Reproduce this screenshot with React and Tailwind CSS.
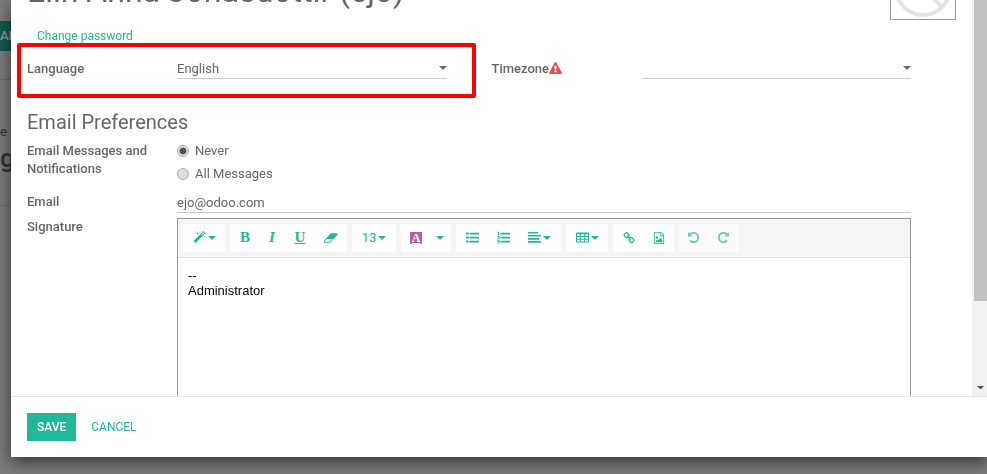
import React from 'react';

const Icon = ({ d, box = 1792, className = "size-3.5" }) => (
  <svg viewBox={`0 0 ${box} 1792`} className={className} fill="currentColor" aria-hidden="true">
    <path d={d} />
  </svg>
);

const icons = {
  magic: "M1254 581l293-293-107-107-293 293zm447-293q0 27-18 45l-1286 1286q-18 18-45 18t-45-18l-198-198q-18-18-18-45t18-45l1286-1286q18-18 45-18t45 18l198 198q18 18 18 45zm-1351-190l98 30-98 30-30 98-30-98-98-30 98-30 30-98zm350 162l196 60-196 60-60 196-60-196-196-60 196-60 60-196zm930 478l98 30-98 30-30 98-30-98-98-30 98-30 30-98zm-640-640l98 30-98 30-30 98-30-98-98-30 98-30 30-98z",
  eraser: "M832 1408l336-384h-768l-336 384h768zm1013-1077q15 34 9.500 71.500t-30.500 65.500l-896 1024q-38 44-96 44h-768q-38 0-69.500-20.500t-47.500-54.500q-15-34-9.500-71.500t30.500-65.500l896-1024q38-44 96-44h768q38 0 69.500 20.500t47.500 54.500z",
  listUl: "M0 192h380v300h-380zM0 746h380v300h-380zM0 1300h380v300h-380zM480 240h1312v230h-1312zM480 790h1312v230h-1312zM480 1340h1312v230h-1312z",
  listOl: "M130 100h150v420h-150zM50 500h300v90h-300zM50 150h100v100h-100zM50 700h310v270l-160 80h160v100h-310v-160l160-100v-80h-160zM50 1230h310v480h-310v-100h160v-90h-110v-100h110v-90h-160zM480 240h1312v230h-1312zM480 790h1312v230h-1312zM480 1340h1312v230h-1312z",
  alignLeft: "M0 128h1408v230h-1408zM0 544h1792v230h-1792zM0 960h1536v230h-1536zM0 1376h1792v230h-1792z",
  table: "M128 192h1536q128 0 128 128v1152q0 128-128 128h-1536q-128 0-128-128v-1152q0-128 128-128zM150 440v260h370v-260zM660 440v260h472v-260zM1272 440v260h370v-260zM150 820v260h370v-260zM660 820v260h472v-260zM1272 820v260h370v-260zM150 1200v260h370v-260zM660 1200v260h472v-260zM1272 1200v260h370v-260z",
  link: "M1520 1216q0-40-28-68l-208-208q-28-28-68-28-42 0-72 32 3 3 19 18.500t21.500 21.500 15 19 13 25.500 3.500 27.500q0 40-28 68t-68 28q-15 0-27.500-3.500t-25.500-13-19-15-21.500-21.500-18.500-19q-33 31-33 73 0 40 28 68l206 207q27 27 68 27 40 0 68-26l147-146q28-28 28-67zm-703-705q0-40-28-68l-206-207q-28-28-68-28-39 0-68 27l-147 146q-28 28-28 67 0 40 28 68l208 208q27 27 68 27 42 0 72-31-3-3-19-18.500t-21.500-21.500-15-19-13-25.500-3.500-27.500q0-40 28-68t68-28q15 0 27.500 3.500t25.500 13 19 15 21.500 21.500 18.500 19q33-31 33-73zm895 705q0 120-85 203l-147 146q-83 83-203 83-121 0-204-85l-206-207q-83-83-83-203 0-123 88-209l-88-88q-86 88-208 88-120 0-204-84l-208-208q-84-84-84-204t85-203l147-146q83-83 203-83 121 0 204 85l206 207q83 83 83 203 0 123-88 209l88 88q86-88 208-88 120 0 204 84l208 208q84 84 84 204z",
  image: "M1596 380q28 28 48 76t20 88v1152q0 40-28 68t-68 28h-1344q-40 0-68-28t-28-68v-1600q0-40 28-68t68-28h896q40 0 88 20t76 48zm-444-244v376h376q-10-29-22-41l-313-313q-12-12-41-22zm384 1528v-1024h-416q-40 0-68-28t-28-68v-416h-768v1536h1280zm-128-448v320h-1024v-192l192-192 128 128 384-384zm-832-192q-80 0-136-56t-56-136 56-136 136-56 136 56 56 136-56 136-136 56z",
  repeat: "M1664 256v448q0 26-19 45t-45 19h-448q-42 0-59-40-17-39 14-69l138-138q-148-137-349-137-104 0-198.500 40.500t-163.500 109.500-109.500 163.500-40.500 198.500 40.500 198.500 109.500 163.500 163.500 109.500 198.500 40.500q119 0 225-52t179-147q7-10 23-12 15 0 25 9l137 138q9 8 9.500 20.500t-7.500 22.500q-109 132-264 204.500t-327 72.500q-156 0-298-61t-245-164-164-245-61-298 61-298 164-245 245-164 298-61q147 0 284.500 55.500t244.500 156.500l130-129q29-31 70-14 39 17 39 59z",
  warning: "M1024 1375v-190q0-14-9.500-23.500t-22.500-9.500h-192q-13 0-22.500 9.500t-9.500 23.500v190q0 14 9.500 23.500t22.500 9.500h192q13 0 22.500-9.500t9.500-23.500zm-2-374l18-459q0-12-10-19-13-11-24-11h-220q-11 0-24 11-10 7-10 21l17 457q0 10 10 16.500t24 6.500h185q14 0 23.500-6.500t10.500-16.500zm-14-934l768 1408q35 63-2 126-17 29-46.500 46t-63.500 17h-1536q-34 0-63.500-17t-46.500-46q-37-63-2-126l768-1408q17-31 47-49t65-18 65 18 47 49z",
};

const Caret = ({ className = "w-2" }) => (
  <svg viewBox="0 0 8 4" className={className} fill="currentColor" aria-hidden="true">
    <path d="M0 0h8L4 4z" />
  </svg>
);

const ToolGroup = ({ children, className = "" }) => (
  <div className={`flex h-7 bg-white ${className}`}>{children}</div>
);

const Tool = ({ label, children, className = "w-7" }) => (
  <button type="button" aria-label={label} className={`flex h-7 items-center justify-center gap-0.5 ${className}`}>
    {children}
  </button>
);

const SelectField = ({ id, label, options, mark }) => (
  <div className="flex flex-1">
    <label htmlFor={id} className="flex w-[150px] shrink-0 items-center font-medium">
      {label}
      {mark}
    </label>
    <div className="flex flex-1 items-center border-b border-[#ccc]">
      <select id={id} className="h-[18px] flex-1 appearance-none bg-transparent outline-none">
        {options.map((option) => <option key={option}>{option}</option>)}
      </select>
      <Caret />
    </div>
  </div>
);

const RadioOption = ({ label, ...props }) => (
  <label className="flex h-[18px] items-center gap-1.5">
    <input
      type="radio"
      name="notify"
      className="size-3 appearance-none rounded-full border border-[#aaa] bg-[#e0e0e0] checked:bg-[radial-gradient(circle,#555_3px,#e8e8e8_4px)]"
      {...props}
    />
    {label}
  </label>
);

const EditorToolbar = () => (
  <div className="flex gap-[5px] border-b border-[#ddd] bg-[#f5f5f5] p-[5px] text-[#21b799]">
    <ToolGroup>
      <Tool label="Style" className="w-[42px]"><Icon d={icons.magic} className="size-[13px]" /><Caret /></Tool>
    </ToolGroup>
    <ToolGroup className="w-[117px] font-['Liberation_Serif',serif] text-[15px] font-bold">
      <Tool label="Bold" className="w-[30px]">B</Tool>
      <Tool label="Italic" className="w-6"><i>I</i></Tool>
      <Tool label="Underline" className="w-8"><u>U</u></Tool>
      <Tool label="Remove formatting" className="w-[29px]"><Icon d={icons.eraser} box={1920} /></Tool>
    </ToolGroup>
    <ToolGroup>
      <Tool label="Font size" className="w-11"><span>13</span><Caret /></Tool>
    </ToolGroup>
    <ToolGroup className="w-[50px]">
      <Tool label="Text color" className="w-[30px]">
        <span className="h-3 w-3 bg-[#b35e9f] text-center font-['Liberation_Serif',serif] text-xs leading-3 font-bold text-white underline">A</span>
      </Tool>
      <Tool label="More colors" className="w-[18px]"><Caret /></Tool>
    </ToolGroup>
    <ToolGroup>
      <Tool label="Bulleted list" className="w-8"><Icon d={icons.listUl} className="size-[13px]" /></Tool>
      <Tool label="Numbered list" className="w-[30px]"><Icon d={icons.listOl} className="size-[13px]" /></Tool>
      <Tool label="Paragraph" className="w-[43px]"><Icon d={icons.alignLeft} className="size-[13px]" /><Caret /></Tool>
    </ToolGroup>
    <ToolGroup>
      <Tool label="Table" className="w-[42px]"><Icon d={icons.table} className="size-[13px]" /><Caret /></Tool>
    </ToolGroup>
    <ToolGroup className="w-[61px]">
      <Tool label="Link" className="w-8"><Icon d={icons.link} className="size-3" /></Tool>
      <Tool label="Picture" className="w-7"><Icon d={icons.image} className="size-3" /></Tool>
    </ToolGroup>
    <ToolGroup className="opacity-65">
      <Tool label="Undo" className="w-[29px]"><Icon d={icons.repeat} className="size-[13px] -scale-x-100" /></Tool>
      <Tool label="Redo" className="w-[30px]"><Icon d={icons.repeat} className="size-[13px]" /></Tool>
    </ToolGroup>
  </div>
);

const PageBehind = () => (
  <div className="h-screen overflow-hidden bg-[#7c7c7c] text-[13px] text-[#333]">
    <div className="h-20 border-b border-[#6b6b6b] pt-[21px]">
      <div className="h-[30px] w-20 bg-[#115c4d] leading-[30px] font-medium text-[#999]">AR</div>
    </div>
    <div className="h-[126px] border-b border-[#6b6b6b] pt-11">
      <p className="leading-4">e .</p>
      <p className="text-[26px] leading-9 font-medium">g</p>
    </div>
  </div>
);

const PreferencesForm = () => (
  <form className="flex min-h-0 flex-1 flex-col">
    <div className="flex min-h-0 flex-1 overflow-hidden">
      <div className="min-w-0 flex-1 pr-[61px] pl-4">
        <div className="-mt-9 flex h-14 justify-between">
          <h1 className="text-[32px] leading-[54px]">Elin Anna Jonasdottir (ejo)</h1>
          <div className="-mr-[45px] h-14 w-[66px] border border-[#999]">
            <svg viewBox="0 0 64 54" className="w-16" fill="none" stroke="#e3e3e3" strokeWidth="4" aria-hidden="true">
              <circle cx="32" cy="23" r="27" />
              <path d="M13 4l38 38" />
            </svg>
          </div>
        </div>
        <a href="#password" className="mt-[7px] ml-2.5 block w-fit text-xs leading-[18px] text-[#21b799]">Change password</a>

        <div className="relative mt-3.5 flex gap-[45px]">
          <SelectField id="lang" label="Language" options={["English"]} />
          <SelectField
            id="tz"
            label="Timezone"
            options={[""]}
            mark={<Icon d={icons.warning} className="size-[13px] text-[#d9534f]" />}
          />
          {/* highlight around the language field */}
          <div className="pointer-events-none absolute -top-4 -left-2.5 h-[55px] w-[calc(50%+17px)] rounded-xs border-4 border-[#fe0000]" />
        </div>

        <h2 className="mt-[31px] text-xl leading-6">Email Preferences</h2>
        <div className="mt-2 flex">
          <span className="w-[150px] pr-4 leading-[18px] font-medium">Email Messages and Notifications</span>
          <div className="flex flex-col gap-[5px]">
            <RadioOption label="Never" defaultChecked />
            <RadioOption label="All Messages" />
          </div>
        </div>
        <div className="mt-2.5 flex">
          <label htmlFor="email" className="w-[150px] leading-[18px] font-medium">Email</label>
          <input id="email" defaultValue="ejo@odoo.com" className="h-5 flex-1 border-b border-[#ccc] outline-none" />
        </div>
        <div className="mt-[5px] flex">
          <label htmlFor="signature" className="w-[150px] leading-[18px] font-medium">Signature</label>
          <div className="min-w-0 flex-1 border border-[#999]">
            <EditorToolbar />
            <textarea
              id="signature"
              defaultValue={"--\nAdministrator"}
              className="block h-48 w-full resize-none p-2.5 font-['Liberation_Sans',Arial,sans-serif] leading-[15px] text-black outline-none"
            />
          </div>
        </div>
      </div>
      <div className="flex w-[15px] shrink-0 flex-col items-center justify-between bg-[#f1f1f1] pb-[7px] pl-0.5">
        <div className="h-[301px] w-full bg-[#c1c1c1]" />
        <Caret className="w-[7px] text-[#505050]" />
      </div>
    </div>
    <footer className="flex gap-[5px] border-t border-[#e5e5e5] px-4 py-4 text-xs">
      <button type="submit" className="h-7 bg-[#21b799] px-2.5 font-medium text-white">SAVE</button>
      <button type="button" className="h-7 px-2.5 text-[#21b799]">CANCEL</button>
    </footer>
  </form>
);

const App = () => (
  <div className="font-[Roboto,sans-serif] text-[13px]">
    <PageBehind />
    <div role="dialog" className="fixed inset-0 flex pb-[17px] pl-[11px] text-[#666]">
      <div className="flex flex-1 bg-white shadow-[0_5px_15px_rgba(0,0,0,0.6)]">
        <PreferencesForm />
      </div>
    </div>
  </div>
);

export default App;
